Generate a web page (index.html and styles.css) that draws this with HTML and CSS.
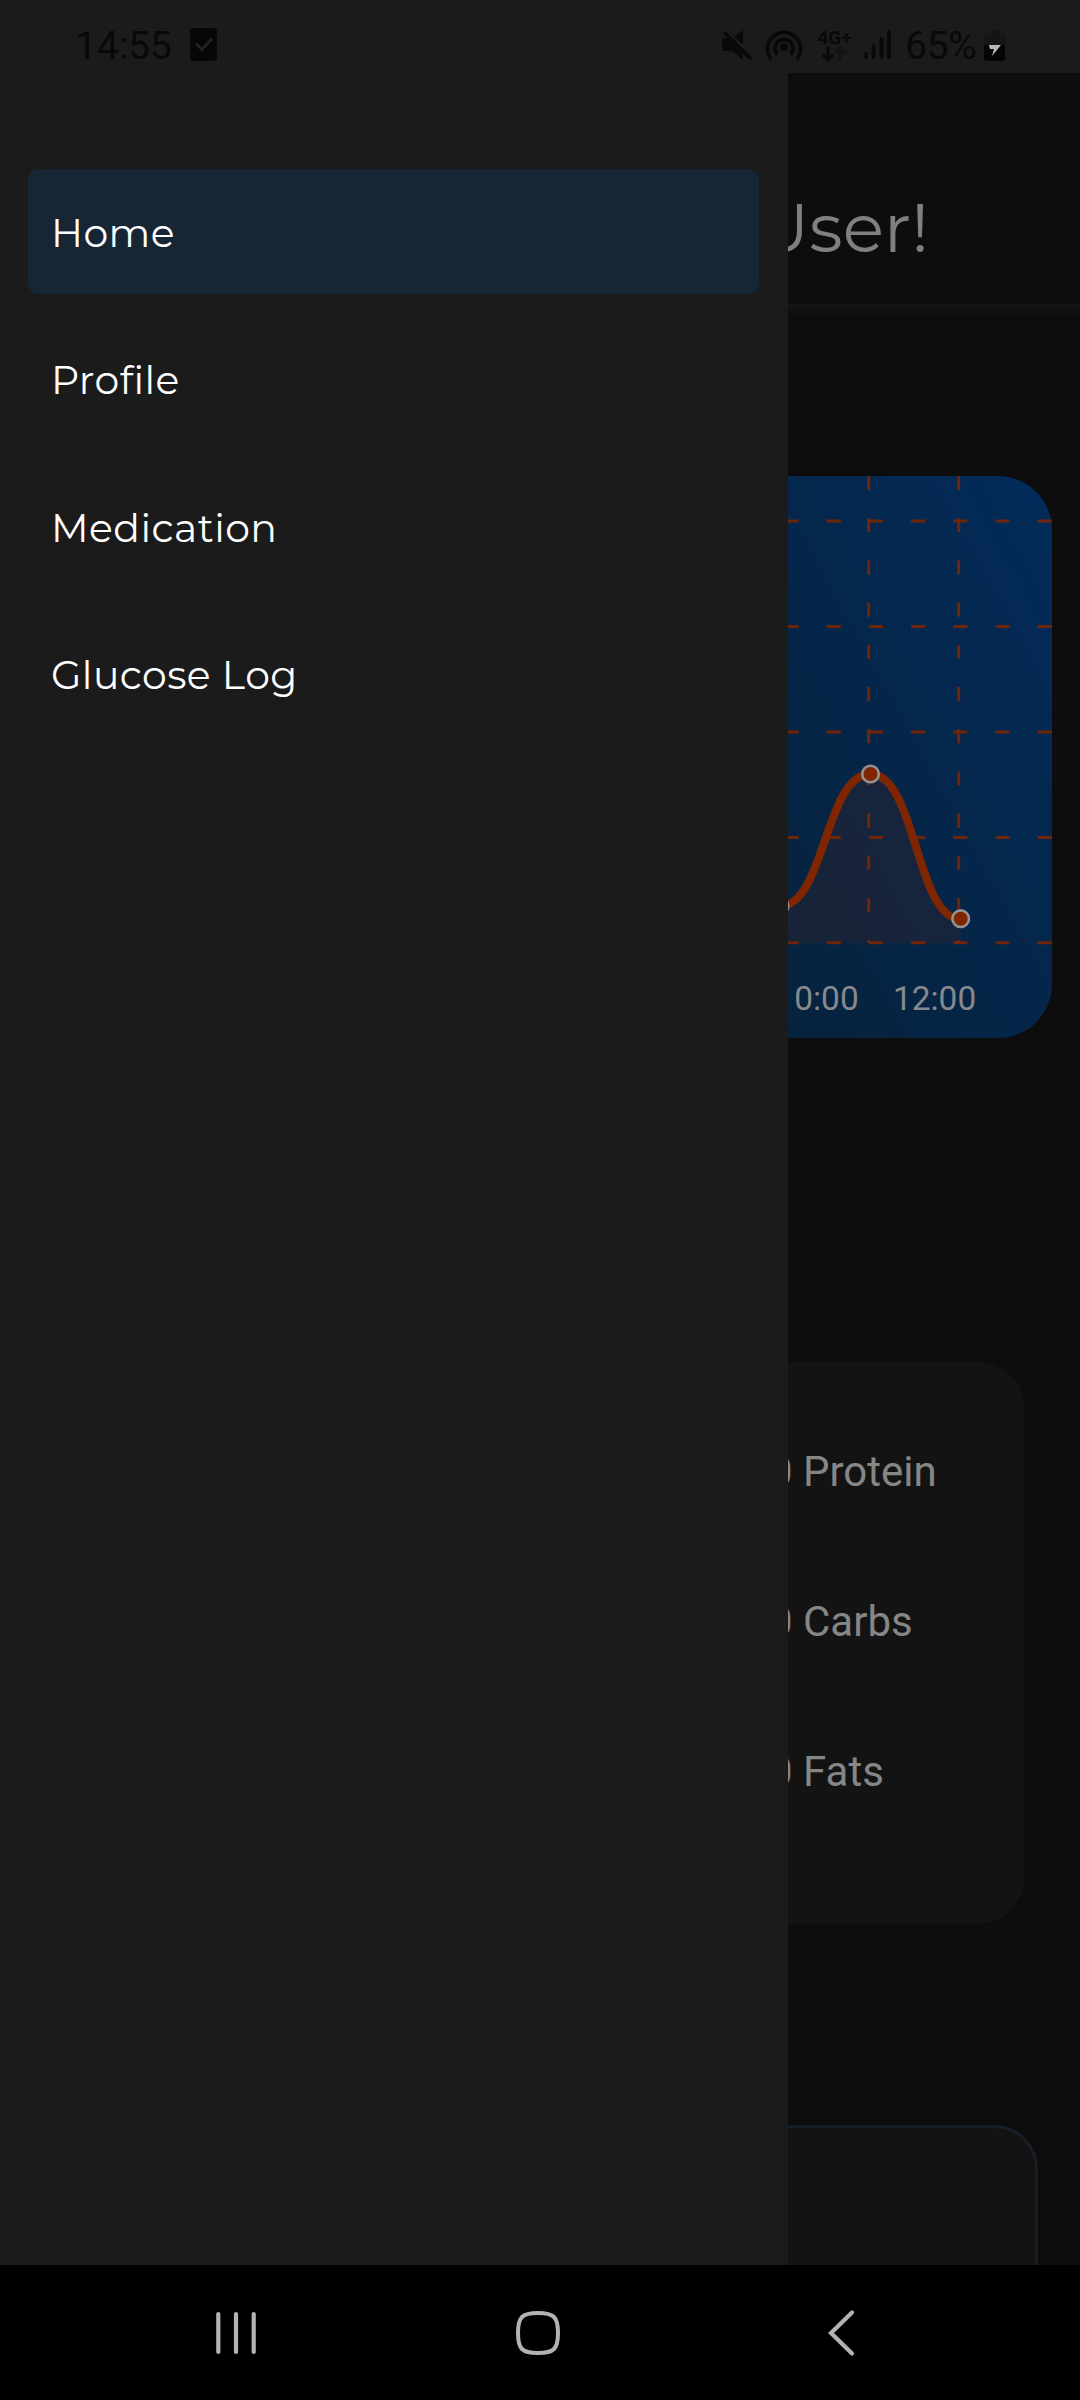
FILE: index.html
```html
<!DOCTYPE html>
<html lang="en">
<head>
<meta charset="utf-8">
<title>Glucose Tracker</title>
<link rel="stylesheet" href="styles.css">
</head>
<body>
<div class="phone">
  <header class="status">
    <div class="status-left">
      <span class="clock">14:55</span>
      <svg width="27" height="34" viewBox="0 0 27 34"><rect y="1" width="27" height="33" rx="4" fill="#070707"/><path d="M6 16.500l6 6 10-11" fill="none" stroke="#222" stroke-width="3"/></svg>
    </div>
    <div class="status-right">
      <svg width="34" height="36" viewBox="720 26 34 36" fill="#090909"><path d="M743 30v15l-9-8zM725 38h4l14 14v8l-11-9h-7q-3 0-3-3v-7q0-3 3-3z"/><path d="M725 33l25 25" stroke="#090909" stroke-width="3.500" stroke-linecap="round"/></svg>
      <svg class="hotspot" width="38" height="36" viewBox="765 26 38 36"><g fill="none" stroke="#090909" stroke-width="3.700"><path d="M771 59a16.500 16.500 0 1 1 26 0"/><path d="M777.500 54.500a9 9 0 1 1 13 0"/></g><circle cx="784" cy="47" r="4" fill="#090909"/></svg>
      <svg class="network" width="35" height="36" viewBox="817 26 35 36"><text x="817.500" y="43.500" textLength="34" lengthAdjust="spacingAndGlyphs" class="network-text">4G+</text><g fill="none" stroke-width="3" stroke-linecap="round" stroke-linejoin="round"><path d="M828 48v12m-4.500-4.500l4.500 4.500 4.500-4.500" stroke="#090909"/><path d="M840.500 60V48m-4.500 4.500l4.500-4.500 4.500 4.500" stroke="#141414"/></g></svg>
      <svg class="signal" width="29" height="36" viewBox="863 26 29 36" stroke="#090909" stroke-width="4" stroke-linecap="round"><path d="M866 54v3M873.500 46v11M881.500 39v18M889 32v25"/></svg>
      <span class="percent">65%</span>
      <svg class="battery" width="22" height="36" viewBox="984 26 22 36"><path d="M984 45v-8q0-3 3-3h3v-2q0-3 3-3h4q3 0 3 3v2h3q3 0 3 3v8z" fill="#151515"/><path d="M984 45h21v13q0 3-3 3h-15q-3 0-3-3z" fill="#050505"/><path d="M989 45h12l-9 11 2-7h-4z" fill="#bababa"/></svg>
    </div>
  </header>

  <main class="screen">
    <div class="title-bar"><h1 class="title">Hello, User!</h1></div>
    <section class="chart">
      <svg width="1024" height="562" viewBox="28 476 1024 562">
        <defs><linearGradient id="sky" gradientUnits="userSpaceOnUse" x1="28" y1="1038" x2="1052" y2="476"><stop offset="0" stop-color="#111b28"/><stop offset=".57" stop-color="#07223c"/><stop offset="1" stop-color="#022b5a"/></linearGradient></defs>
        <rect x="28" y="476" width="1024" height="562" rx="54" fill="url(#sky)"/>
        <path d="M780 906C825 906 825 774 870.500 774S916 919 960.700 919V943H780z" fill="#7f2600" fill-opacity=".14"/>
        <g stroke="#7f2600" stroke-opacity=".88" stroke-width="3" stroke-dasharray="14.070 28.130">
          <path d="M67.100 521H1052"/><path d="M67.100 626.500H1052"/><path d="M67.100 732H1052"/><path d="M67.100 837.500H1052"/><path d="M67.100 942.700H1052"/>
          <path d="M868.700 476V943"/><path d="M958.700 476V943"/>
        </g>
        <path d="M780 906C825 906 825 774 870.500 774S916 919 960.700 919" fill="none" stroke="#7f2600" stroke-width="8"/>
        <g fill="#7f2600" stroke="#929292" stroke-width="2.600"><circle cx="780" cy="906" r="8.300"/><circle cx="870.500" cy="774" r="8.300"/><circle cx="960.700" cy="918.700" r="8.300"/></g>
        <g class="axis"><text x="775.500" y="1010">10:00</text><text x="893" y="1010">12:00</text></g>
      </svg>
    </section>
    <section class="macros">
      <p>0 Protein</p>
      <p>0 Carbs</p>
      <p>0 Fats</p>
    </section>
    <section class="panel"></section>
  </main>

  <nav class="drawer">
    <a class="item active">Home</a>
    <a class="item">Profile</a>
    <a class="item">Medication</a>
    <a class="item">Glucose Log</a>
  </nav>

  <footer class="navbar">
    <svg width="48" height="48" viewBox="212 2309 48 48" stroke="#b3b3b3" stroke-width="4.200" stroke-linecap="round"><path d="M218.300 2314v38M236 2314v38M253.700 2314v38"/></svg>
    <svg width="48" height="48" viewBox="514 2309 48 48" fill="none" stroke="#b3b3b3" stroke-width="4"><path d="M538 2313c16 0 20 4 20 20s-4 20-20 20-20-4-20-20 4-20 20-20z"/></svg>
    <svg width="48" height="48" viewBox="816 2309 48 48" fill="none" stroke="#b3b3b3" stroke-width="4.200" stroke-linecap="round"><path d="M852 2312.500L831 2333l21 20.500"/></svg>
  </footer>
</div>
</body>
</html>
```
FILE: styles.css
```css
* { box-sizing: border-box; }
body { margin: 0; background: #0d0d0d; }
svg { display: block; flex: none; }
.phone {
  position: relative;
  display: flex;
  flex-direction: column;
  width: 1080px;
  height: 2400px;
  overflow: hidden;
  font-family: Roboto, sans-serif;
}
.status {
  position: relative;
  z-index: 2;
  display: flex;
  justify-content: space-between;
  height: 73px;
  padding: 26px 74px 0 75px;
  background: #1b1b1b;
  color: #090909;
  font-size: 39.200px;
  line-height: 38px;
}
.status-left, .status-right { display: flex; }
.status-left { gap: 17px; padding-top: 1px; }
.clock { width: 98px; letter-spacing: -0.2px; }
.percent { width: 73px; margin: 1px 6px 0 13px; letter-spacing: -0.5px; white-space: nowrap; }
.hotspot { margin-left: 11px; }
.network { margin-left: 14px; }
.signal { margin-left: 11px; }
.network-text { font: 700 18px Roboto, sans-serif; fill: #090909; }

.screen {
  display: flex;
  flex-direction: column;
  height: 2192px;
  overflow: hidden;
  background: #0d0d0d;
  color: #868686;
}
.title-bar {
  flex: none;
  height: 243px;
  padding: 115px 151px 0 0;
  background: linear-gradient(#161616, #0d0d0d) bottom / 100% 12px no-repeat;
  text-align: right;
}
.title {
  margin: 0;
  font: 400 68.250px/80px Montserrat, Inter, sans-serif;
  color: #808080;
}
.chart { flex: none; margin: 160px 28px 0; }
.axis { font: 33.400px Roboto, sans-serif; fill: #868a8f; }
.macros {
  display: flex;
  flex: none;
  flex-direction: column;
  gap: 100px;
  height: 562px;
  margin: 324px 56px 0;
  padding: 85px 0 0 713px;
  border-radius: 46px;
  background: #131313;
  font-size: 42px;
  line-height: 50px;
}
.macros p { margin: 0; }
.panel {
  flex: none;
  height: 300px;
  margin: 201px 42px 0;
  border: 3px solid #161f28;
  border-radius: 44px;
  background: #131313;
}

.drawer {
  position: absolute;
  z-index: 1;
  top: 0;
  left: 0;
  display: flex;
  flex-direction: column;
  gap: 22.500px;
  width: 788px;
  height: 2265px;
  padding: 169px 29px 0 28px;
  background: #1b1b1b;
}
.item {
  display: flex;
  align-items: center;
  height: 125px;
  padding: 2px 0 0 23px;
  border-radius: 11px;
  color: #fff;
  font: 400 39.375px/48px Montserrat, Inter, sans-serif;
  letter-spacing: 0.45px;
}
.active { background: #172635; }

.navbar {
  display: flex;
  gap: 254px;
  height: 135px;
  padding: 44px 0 0 212px;
  background: #000;
}
```
